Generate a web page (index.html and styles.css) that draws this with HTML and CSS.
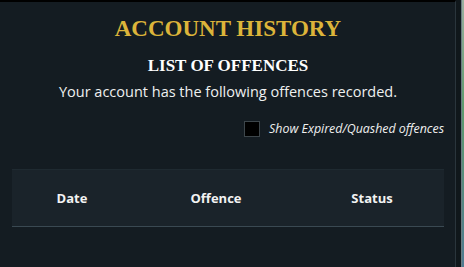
FILE: index.html
```html
<!DOCTYPE html>
<html lang="en">
  <head>
    <meta charset="UTF-8" />
    <meta name="viewport" content="width=device-width, initial-scale=1.0" />
    <title>Account History</title>

    <!-- CSS -->
    <link rel="stylesheet" href="styles.css">
  </head>
  <body>
    <div id="panel">
      <h1 class="title">Account History</h1>
      <h2 class="subtitle">List of Offences</h2>
      <p class="intro">Your account has the following offences recorded.</p>

      <div class="filter">
        <span class="box"></span>
        <label class="filterLabel">Show Expired/Quashed offences</label>
      </div>

      <table class="offences">
        <thead>
          <tr>
            <th class="colDate">Date</th>
            <th class="colOffence">Offence</th>
            <th class="colStatus">Status</th>
          </tr>
        </thead>
      </table>
    </div>
    <div class="gutter"></div>
    <div class="rail"></div>
    <div class="side"></div>
  </body>
</html>
```

FILE: styles.css
```css
html {
  font-family: "Open Sans", "Noto Sans", sans-serif;
}

body {
  margin: 0;
  height: 267px;
  display: flex;
  background-color: #141c22;
  overflow: hidden;
}

#panel {
  box-sizing: border-box;
  width: 456px;
  height: 267px;
  border-top: 2px solid #000;
  border-right: 1px solid #2a353c;
  padding: 0 11px 0 12px;
  color: #fff;
  text-align: center;
}

.title {
  margin: 13px 0 0;
  font-family: "Liberation Serif", serif;
  font-size: 23px;
  font-weight: bold;
  text-transform: uppercase;
  color: #dcb43a;
  line-height: 28px;
}

.subtitle {
  margin: 13px 0 0;
  font-family: "Liberation Serif", serif;
  font-size: 17px;
  font-weight: bold;
  text-transform: uppercase;
  line-height: 20px;
}

.intro {
  margin: 6px 0 0;
  font-size: 14.5px;
  line-height: 20px;
  color: #eef0f0;
}

.filter {
  margin-top: 18px;
  display: flex;
  justify-content: flex-end;
  align-items: center;
  gap: 9px;
}

.box {
  box-sizing: border-box;
  width: 16px;
  height: 16px;
  background-color: #000;
  border: 1px solid #3d464b;
}

.filterLabel {
  font-size: 12.4px;
  font-style: italic;
  color: #f0f0f0;
}

.offences {
  width: 432px;
  margin-top: 32px;
  border-collapse: collapse;
  background-color: #1a232a;
  border-top: 1px solid #1f2a31;
  border-bottom: 1px solid #3a4952;
}

.offences th {
  height: 56px;
  padding: 0;
  font-size: 13px;
  font-weight: bold;
  color: #f2f2f2;
}

.colDate {
  width: 120px;
}

.colOffence {
  width: 168px;
}

.colStatus {
  width: 144px;
}

.gutter {
  width: 5px;
  background-color: #10171b;
}

.rail {
  width: 1px;
  background-color: #6d7d84;
}

.side {
  flex: 1;
  background: linear-gradient(#9ab0a0, #5f9a6e 40%, #4f7a90 100%);
}
```
